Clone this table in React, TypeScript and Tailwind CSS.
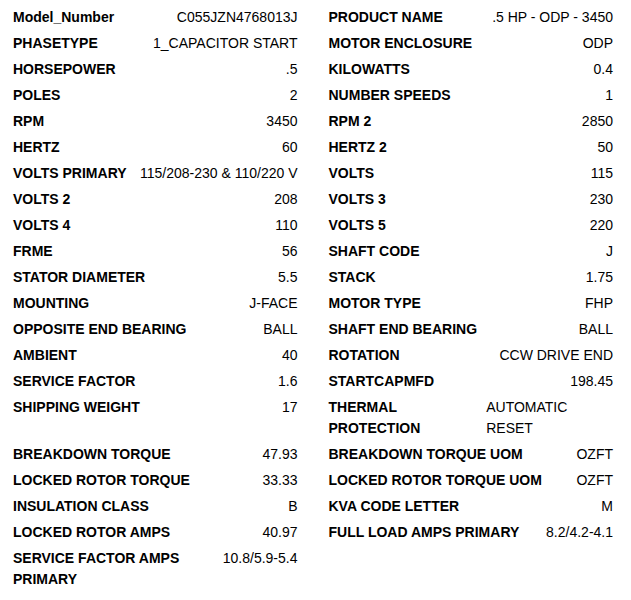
const rows: [string, string, string, string][] = [
  ["Model_Number", "C055JZN4768013J", "PRODUCT NAME", ".5 HP - ODP - 3450"],
  ["PHASETYPE", "1_CAPACITOR START", "MOTOR ENCLOSURE", "ODP"],
  ["HORSEPOWER", ".5", "KILOWATTS", "0.4"],
  ["POLES", "2", "NUMBER SPEEDS", "1"],
  ["RPM", "3450", "RPM 2", "2850"],
  ["HERTZ", "60", "HERTZ 2", "50"],
  ["VOLTS PRIMARY", "115/208-230 & 110/220 V", "VOLTS", "115"],
  ["VOLTS 2", "208", "VOLTS 3", "230"],
  ["VOLTS 4", "110", "VOLTS 5", "220"],
  ["FRME", "56", "SHAFT CODE", "J"],
  ["STATOR DIAMETER", "5.5", "STACK", "1.75"],
  ["MOUNTING", "J-FACE", "MOTOR TYPE", "FHP"],
  ["OPPOSITE END BEARING", "BALL", "SHAFT END BEARING", "BALL"],
  ["AMBIENT", "40", "ROTATION", "CCW DRIVE END"],
  ["SERVICE FACTOR", "1.6", "STARTCAPMFD", "198.45"],
  ["SHIPPING WEIGHT", "17", "THERMAL PROTECTION", "AUTOMATIC RESET"],
  ["BREAKDOWN TORQUE", "47.93", "BREAKDOWN TORQUE UOM", "OZFT"],
  ["LOCKED ROTOR TORQUE", "33.33", "LOCKED ROTOR TORQUE UOM", "OZFT"],
  ["INSULATION CLASS", "B", "KVA CODE LETTER", "M"],
  ["LOCKED ROTOR AMPS", "40.97", "FULL LOAD AMPS PRIMARY", "8.2/4.2-4.1"],
  ["SERVICE FACTOR AMPS PRIMARY", "10.8/5.9-5.4", "", ""],
];

function Spec({ label, value }: { label: string; value: string }) {
  if (!label) return <div />;
  // values without spaces never break (hyphens included)
  const nowrap = !value.includes(" ");
  return (
    <div className="flex items-start justify-between pl-[13px] pr-[18px]">
      <span className="font-bold">{label}</span>
      <span className={nowrap ? "whitespace-nowrap" : ""}>{value}</span>
    </div>
  );
}

export default function App() {
  return (
    <div className="min-h-[600px] w-[631px] bg-white pt-[7px] font-['Liberation_Sans',Arial,sans-serif] text-[14px] leading-[21px] text-black">
      <div className="grid grid-cols-2 gap-y-[5px]">
        {rows.map(([l1, v1, l2, v2]) => (
          <div key={l1} className="contents">
            <Spec label={l1} value={v1} />
            <Spec label={l2} value={v2} />
          </div>
        ))}
      </div>
    </div>
  );
}
